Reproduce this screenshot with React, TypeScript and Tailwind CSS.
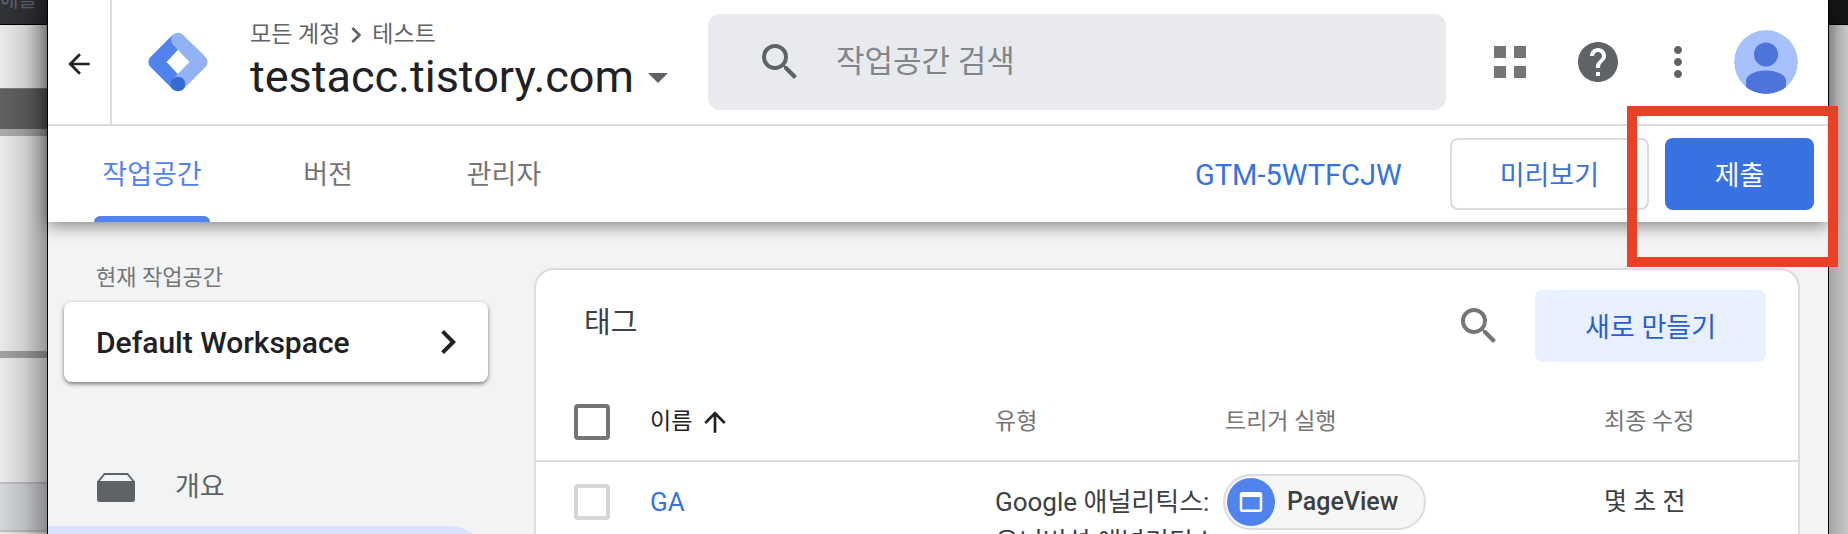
import { ReactNode } from 'react';
import { MdArrowBack, MdArrowDropDown, MdArrowUpward, MdChevronRight, MdHelp, MdMoreVert, MdSearch, MdWebAsset } from 'react-icons/md';

interface Tag {
  id: string;
  name: string;
  type: string[];
  trigger: string;
  modified: string;
}

const TABS = ['작업공간', '버전', '관리자'];

const TAGS: Tag[] = [
  {
    id: 'ga',
    name: 'GA',
    type: ['Google 애널리틱스:', '유니버설 애널리틱스'],
    trigger: 'PageView',
    modified: '몇 초 전',
  },
];

function TagManagerLogo() {
  return (
    <svg viewBox="0 0 60 60" className="size-[60px] shrink-0" role="img" aria-label="Tag Manager">
      <path d="M25 2.5 2.5 25a7 7 0 0 0 0 10L25 57.5 35 47.5 18.5 30 35 12.5Z" fill="#5183ee" />
      <path d="M35 2.800a7.200 7.200 0 0 0-10 0 7.200 7.200 0 0 0 0 10L41.500 30 25 47l10 10.500L57.500 35a7 7 0 0 0 0-10Z" fill="#93b2f4" />
      <circle cx="30" cy="52" r="7.300" fill="#366bd4" />
    </svg>
  );
}

function AppsIcon() {
  return (
    <svg viewBox="0 0 32 32" className="size-8" fill="#757575" aria-hidden>
      <path d="M0 0h12v12H0zM20 0h12v12H20zM0 20h12v12H0zM20 20h12v12H20z" />
    </svg>
  );
}

function Avatar() {
  return (
    <svg viewBox="0 0 64 64" className="size-16 rounded-full" aria-hidden>
      <circle cx="32" cy="32" r="32" fill="#a6c1fb" />
      <circle cx="32" cy="24.500" r="12" fill="#4e73d9" />
      <path d="M12 64V51c0-6 9-10.500 20-10.500S52 45 52 51v13Z" fill="#4e73d9" />
    </svg>
  );
}

function OverviewIcon() {
  return (
    <svg viewBox="0 0 38 29" className="h-[29px] w-[38px]" aria-hidden>
      <path d="M7.500 1h23L37 9H1Z" fill="none" stroke="#5f6368" strokeWidth="1.800" />
      <path d="M0 8h38v18.500a2.500 2.500 0 0 1-2.500 2.500h-33A2.500 2.500 0 0 1 0 26.500Z" fill="#5f6368" />
    </svg>
  );
}

function IconButton({ label, children }: { label: string; children: ReactNode }) {
  return (
    <button type="button" aria-label={label} className="flex shrink-0 items-center justify-center">
      {children}
    </button>
  );
}

/** Dimmed page that shows on the left of the window. */
function BackdropLeft() {
  return (
    <div className="relative flex w-[47px] shrink-0 flex-col overflow-hidden bg-[#f6f6f6]" aria-hidden>
      <div className="h-6 shrink-0 overflow-hidden bg-[#33353b]">
        <p className="-mt-3 text-[20px] leading-6 whitespace-nowrap text-[#6b6e73]">애플—</p>
      </div>
      <div className="h-16 shrink-0 border-t border-black" />
      <div className="h-[41px] shrink-0 border-t border-[#858585] bg-[#666]" />
      <div className="h-[7px] shrink-0 bg-[#b4b4b4]" />
      <div className="h-[215px] shrink-0" />
      <div className="h-[7px] shrink-0 bg-[#a9a9a9]" />
      <div className="h-[124px] shrink-0" />
      <div className="h-[50px] shrink-0 border-y-2 border-[#c8c8cc] bg-[#dfe2e6]" />
      <div className="absolute inset-0 bg-linear-to-r from-black/5 via-black/15 to-black/38" />
    </div>
  );
}

function BackdropRight() {
  return (
    <div className="w-[19px] shrink-0 bg-linear-to-r from-[#a6a6a6] to-[#c6c6c6]" aria-hidden>
      <div className="h-[25px] border-b border-black bg-[#141517]" />
    </div>
  );
}

function TopBar() {
  return (
    <div className="flex h-[126px] border-b-2 border-[#dadce0]">
      <div className="flex w-16 shrink-0 items-center justify-center border-r-2 border-[#dadce0] pt-[3px] text-[#202124]">
        <IconButton label="뒤로">
          <MdArrowBack size={32} />
        </IconButton>
      </div>
      <div className="flex min-w-0 flex-1 items-center pr-[30px] pl-9">
        <TagManagerLogo />
        <div className="ml-[42px] shrink-0 pb-[3px]">
          <nav className="flex items-center text-[23px] leading-[30px] text-[#5f6368]">
            <a href="#accounts">모든 계정</a>
            <MdChevronRight size={32} />
            <a href="#test">테스트</a>
          </nav>
          <button type="button" className="flex items-center text-[45px] leading-[52px] text-[#202124]">
            testacc.tistory.com
            <MdArrowDropDown size={48} className="text-[#5f6368]" />
          </button>
        </div>
        <label className="ml-[26px] flex h-24 min-w-0 flex-1 items-center rounded-xl bg-[#e8eaed] pl-12">
          <MdSearch size={48} className="shrink-0 text-[#5f6368]" />
          <input
            type="text"
            aria-label="작업공간 검색"
            placeholder="작업공간 검색"
            className="ml-8 w-full min-w-0 bg-transparent text-[31px] leading-10 placeholder-[#80868b] outline-none"
          />
        </label>
        <div className="ml-12 flex items-center">
          <IconButton label="앱">
            <AppsIcon />
          </IconButton>
          <div className="ml-12 text-[#5f6368]">
            <IconButton label="도움말">
              <MdHelp size={48} />
            </IconButton>
          </div>
          <div className="ml-8 text-[#5f6368]">
            <IconButton label="더보기">
              <MdMoreVert size={48} />
            </IconButton>
          </div>
          <div className="ml-8">
            <IconButton label="계정">
              <Avatar />
            </IconButton>
          </div>
        </div>
      </div>
    </div>
  );
}

function NavBar() {
  return (
    <div className="flex h-24 items-center pr-[14px] pl-[46px]">
      <nav className="flex gap-[60px] self-stretch text-[27px]">
        {TABS.map((tab, index) => (
          <a
            key={tab}
            href={`#${tab}`}
            className={
              index === 0
                ? 'relative flex min-w-[116px] items-center justify-center pt-0.5 text-[#5183ee]'
                : 'flex min-w-[116px] items-center justify-center pt-0.5 text-[#757575]'
            }
          >
            {tab}
            {index === 0 && <span className="absolute inset-x-0 bottom-0 h-[6px] rounded-t-lg bg-[#5183ee]" />}
          </a>
        ))}
      </nav>
      <div className="ml-auto flex items-center text-[27px] text-[#3871e0]">
        <a href="#container" className="pt-1 text-[29px]">
          GTM-5WTFCJW
        </a>
        <button type="button" className="ml-12 h-[72px] rounded-lg border-2 border-[#dadce0] px-12 pt-1">
          미리보기
        </button>
        {/* highlight drawn round the submit button */}
        <div className="relative ml-4">
          <button type="button" className="h-[72px] w-[149px] rounded-lg bg-[#3871e0] pt-1 text-white">
            제출
          </button>
          <div className="pointer-events-none absolute -top-8 -right-6 -bottom-[57px] -left-[38px] border-10 border-[#ea4025]" />
        </div>
      </div>
    </div>
  );
}

function Sidebar() {
  return (
    <aside className="w-[486px] shrink-0 pt-10">
      <p className="pl-12 text-[22px] leading-8 text-[#757575]">현재 작업공간</p>
      <button
        type="button"
        className="mt-2 ml-4 flex h-20 w-[424px] items-center justify-between rounded-lg bg-white pr-4 pl-8 text-[30px] font-medium text-[#202124] shadow-[0_2px_4px_rgba(0,0,0,0.5)]"
      >
        Default Workspace
        <MdChevronRight size={48} />
      </button>
      <nav className="mt-[68px] text-[27px] text-[#5f6368]">
        <a href="#overview" className="flex h-[74px] items-center gap-10 pl-[49px]">
          <OverviewIcon />
          개요
        </a>
        <a href="#tags" aria-label="태그" className="mt-0.5 block h-[72px] w-[438px] rounded-r-full bg-[#d7e2fa]" />
      </nav>
    </aside>
  );
}

function TagTable() {
  return (
    <table className="w-full table-fixed text-left">
      <thead>
        <tr className="h-[78px] border-b-2 border-[#dadce0] text-[23px] text-[#757575]">
          <th className="w-[114px] pl-[38px]">
            <input
              type="checkbox"
              aria-label="모두 선택"
              className="block size-9 appearance-none rounded-sm border-4 border-[#757575]"
            />
          </th>
          <th className="w-[345px] font-normal text-[#202124]">
            <span className="flex items-center gap-[7px]">
              <span className="pt-0.5">이름</span>
              <MdArrowUpward size={32} />
            </span>
          </th>
          <th className="w-[230px] pt-0.5 font-normal">유형</th>
          <th className="pt-0.5 font-normal">트리거 실행</th>
          <th className="w-[194px] pt-0.5 font-normal">최종 수정</th>
        </tr>
      </thead>
      <tbody>
        {TAGS.map((tag) => (
          <tr key={tag.id} className="align-top text-[25px] leading-10 text-[#3c4043]">
            <td className="pt-[22px] pl-[38px]">
              <input
                type="checkbox"
                aria-label={tag.name}
                className="block size-9 appearance-none rounded-sm border-4 border-[#d6d6d6]"
              />
            </td>
            <td className="pt-5">
              <a href={`#${tag.id}`} className="text-[26px] text-[#3871e0]">
                {tag.name}
              </a>
            </td>
            <td className="pt-5 text-[26px] whitespace-nowrap">
              {tag.type.map((line) => (
                <span key={line} className="block">
                  {line}
                </span>
              ))}
            </td>
            <td className="pt-3">
              <a
                href="#trigger"
                className="-ml-0.5 inline-flex h-14 items-center gap-3 rounded-full border-2 border-[#dadce0] bg-[#f6f6f6] pr-[26px] pl-[2px] font-medium"
              >
                <span className="flex size-12 items-center justify-center rounded-full bg-[#5183ee] text-white">
                  <MdWebAsset size={30} />
                </span>
                {tag.trigger}
              </a>
            </td>
            <td className="pt-5">{tag.modified}</td>
          </tr>
        ))}
      </tbody>
    </table>
  );
}

export default function App() {
  return (
    <div className="flex h-screen overflow-hidden font-['Roboto','Noto_Sans_CJK_KR',sans-serif]">
      <BackdropLeft />
      <div className="flex min-w-0 flex-1 flex-col border-x border-black bg-[#f1f3f4]">
        <header className="relative z-10 shrink-0 bg-white shadow-[0_4px_16px_rgba(0,0,0,0.45)]">
          <TopBar />
          <NavBar />
        </header>
        <div className="flex min-h-0 flex-1">
          <Sidebar />
          <main className="mt-[46px] mr-7 min-w-0 flex-1">
            <section className="min-h-screen rounded-[20px] border-2 border-[#dadce0] bg-white">
              <div className="flex items-center pt-5 pr-8 pl-12">
                <h2 className="pb-[6px] text-[29px] leading-10 text-[#3c4043]">태그</h2>
                <div className="ml-auto text-[#757575]">
                  <IconButton label="검색">
                    <MdSearch size={48} />
                  </IconButton>
                </div>
                <button
                  type="button"
                  className="ml-8 h-[72px] rounded-lg bg-[#e9f0fd] px-[50px] pt-1 text-[27px] text-[#2a5fcc]"
                >
                  새로 만들기
                </button>
              </div>
              <div className="mt-[21px]">
                <TagTable />
              </div>
            </section>
          </main>
        </div>
      </div>
      <BackdropRight />
    </div>
  );
}
